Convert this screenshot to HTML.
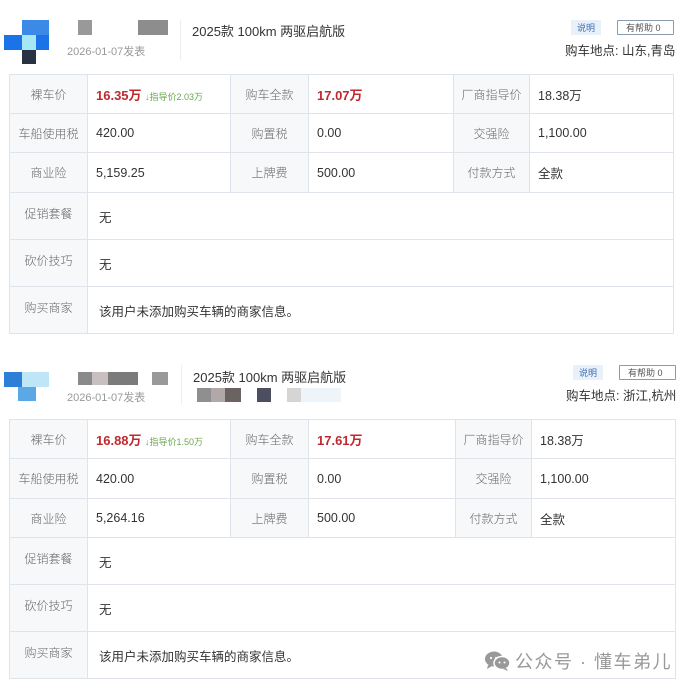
<!DOCTYPE html>
<html><head><meta charset="utf-8"><style>
*{margin:0;padding:0;box-sizing:border-box}
body{width:695px;height:687px;background:#fff;position:relative;overflow:hidden;font-family:"Liberation Sans","Noto Sans CJK SC",sans-serif;color:#333}
.a{position:absolute}
table{position:absolute;border-collapse:collapse;table-layout:fixed;font-size:12.5px}
td{border:1px solid #dfe3ea;padding:0 0 0 8px;vertical-align:middle}
td.l{background:#f7f8fa;text-align:center;padding:0;color:#666;font-size:12px;font-weight:300}
td.lt{vertical-align:top;padding-top:12px}
.r{color:#c0282e;font-weight:bold;font-size:13px}
.g{color:#6aa84f;font-size:9px;font-weight:normal}
.px{position:absolute}
.btn1{position:absolute;font-size:9px;color:#3e6fb5;background:#e8f0fa;padding:1px 6px}
.btn2{position:absolute;font-size:9px;color:#555;border:1px solid #8a9ab0;padding:0 8px;border-radius:1px}
</style></head><body>

<div class="px" style="left:22px;top:20px;width:27px;height:15px;background:#3b8ae8"></div>
<div class="px" style="left:4px;top:35px;width:18px;height:15px;background:#1b73e8"></div>
<div class="px" style="left:22px;top:35px;width:14px;height:15px;background:#a6e7f5"></div>
<div class="px" style="left:36px;top:35px;width:13px;height:15px;background:#1b73e8"></div>
<div class="px" style="left:22px;top:50px;width:14px;height:14px;background:#283243"></div>
<div class="px" style="left:78px;top:20px;width:14px;height:15px;background:#999"></div>
<div class="px" style="left:138px;top:20px;width:30px;height:15px;background:#8d8d8d"></div>
<div class="a" style="left:67px;top:43px;font-size:11px;color:#999">2026-01-07发表</div>
<div class="px" style="left:180px;top:20px;width:1px;height:40px;background:#eee"></div>
<div class="a" style="left:192px;top:21px;font-size:13px;color:#333">2025款 100km 两驱启航版</div>
<div class="btn1" style="left:571px;top:20px">说明</div>
<div class="btn2" style="left:617px;top:20px;width:57px">有帮助 0</div>
<div class="a" style="left:565px;top:40px;font-size:12.5px;color:#333">购车地点: 山东,青岛</div>

<table style="left:9px;top:74px;width:664px">
<colgroup><col style="width:78px"><col style="width:143px"><col style="width:78px"><col style="width:145px"><col style="width:76px"><col style="width:144px"></colgroup>
<tr style="height:39px"><td class="l">裸车价</td><td><span class="r">16.35万</span> <span class="g">↓指导价2.03万</span></td><td class="l">购车全款</td><td><span class="r">17.07万</span></td><td class="l">厂商指导价</td><td>18.38万</td></tr>
<tr style="height:39px"><td class="l">车船使用税</td><td>420.00</td><td class="l">购置税</td><td>0.00</td><td class="l">交强险</td><td>1,100.00</td></tr>
<tr style="height:40px"><td class="l">商业险</td><td>5,159.25</td><td class="l">上牌费</td><td>500.00</td><td class="l">付款方式</td><td>全款</td></tr>
<tr style="height:47px"><td class="l lt">促销套餐</td><td colspan="5" style="padding-left:11px">无</td></tr>
<tr style="height:47px"><td class="l lt">砍价技巧</td><td colspan="5" style="padding-left:11px">无</td></tr>
<tr style="height:47px"><td class="l lt">购买商家</td><td colspan="5" style="padding-left:11px">该用户未添加购买车辆的商家信息。</td></tr>
</table>

<div class="px" style="left:4px;top:372px;width:18px;height:15px;background:#2e7fd6"></div>
<div class="px" style="left:22px;top:372px;width:27px;height:15px;background:#bfe6f7"></div>
<div class="px" style="left:18px;top:387px;width:18px;height:14px;background:#5aa8e6"></div>
<div class="px" style="left:78px;top:372px;width:14px;height:13px;background:#8a8a8a"></div>
<div class="px" style="left:92px;top:372px;width:16px;height:13px;background:#c8bfc0"></div>
<div class="px" style="left:108px;top:372px;width:30px;height:13px;background:#7b7b7b"></div>
<div class="px" style="left:152px;top:372px;width:16px;height:13px;background:#999"></div>
<div class="a" style="left:67px;top:389px;font-size:11px;color:#999">2026-01-07发表</div>
<div class="px" style="left:181px;top:365px;width:1px;height:40px;background:#eee"></div>
<div class="a" style="left:193px;top:367px;font-size:13px;color:#333">2025款 100km 两驱启航版</div>
<div class="px" style="left:197px;top:388px;width:14px;height:14px;background:#8f8f8f"></div>
<div class="px" style="left:211px;top:388px;width:14px;height:14px;background:#b0a9a8"></div>
<div class="px" style="left:225px;top:388px;width:16px;height:14px;background:#6b6361"></div>
<div class="px" style="left:257px;top:388px;width:14px;height:14px;background:#4d4f60"></div>
<div class="px" style="left:287px;top:388px;width:14px;height:14px;background:#d5d5d5"></div>
<div class="px" style="left:301px;top:388px;width:40px;height:14px;background:#eef5fa"></div>
<div class="btn1" style="left:573px;top:365px">说明</div>
<div class="btn2" style="left:619px;top:365px;width:57px">有帮助 0</div>
<div class="a" style="left:566px;top:385px;font-size:12.5px;color:#333">购车地点: 浙江,杭州</div>

<table style="left:9px;top:419px;width:666px">
<colgroup><col style="width:78px"><col style="width:143px"><col style="width:78px"><col style="width:147px"><col style="width:76px"><col style="width:144px"></colgroup>
<tr style="height:39px"><td class="l">裸车价</td><td><span class="r">16.88万</span> <span class="g">↓指导价1.50万</span></td><td class="l">购车全款</td><td><span class="r">17.61万</span></td><td class="l">厂商指导价</td><td>18.38万</td></tr>
<tr style="height:40px"><td class="l">车船使用税</td><td>420.00</td><td class="l">购置税</td><td>0.00</td><td class="l">交强险</td><td>1,100.00</td></tr>
<tr style="height:39px"><td class="l">商业险</td><td>5,264.16</td><td class="l">上牌费</td><td>500.00</td><td class="l">付款方式</td><td>全款</td></tr>
<tr style="height:47px"><td class="l lt">促销套餐</td><td colspan="5" style="padding-left:11px">无</td></tr>
<tr style="height:47px"><td class="l lt">砍价技巧</td><td colspan="5" style="padding-left:11px">无</td></tr>
<tr style="height:47px"><td class="l lt">购买商家</td><td colspan="5" style="padding-left:11px">该用户未添加购买车辆的商家信息。</td></tr>
</table>

<svg class="a" style="left:484px;top:650px" width="28" height="22" viewBox="0 0 28 22">
<ellipse cx="10" cy="9" rx="9" ry="7.5" fill="#999"/>
<path d="M4 15 L3 19 L8 16 Z" fill="#999"/>
<ellipse cx="18" cy="13" rx="8" ry="6.5" fill="#999" stroke="#fff" stroke-width="1.5"/>
<path d="M22 18 L24 21 L19 19 Z" fill="#999"/>
<circle cx="7" cy="8" r="1.1" fill="#fff"/><circle cx="12" cy="8" r="1.1" fill="#fff"/>
<circle cx="15.5" cy="12.5" r="1" fill="#fff"/><circle cx="20.5" cy="12.5" r="1" fill="#fff"/>
</svg>
<div class="a" style="left:515px;top:648px;font-size:18px;color:#999;letter-spacing:1.5px;white-space:nowrap">公众号 · 懂车弟儿</div>
</body></html>
